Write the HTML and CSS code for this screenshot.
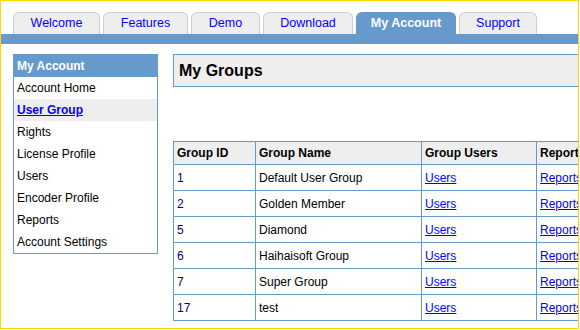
FILE: index.html
```html
<!DOCTYPE html>
<html lang="en">
<head>
  <meta charset="UTF-8">
  <title>My Account - User Group</title>
  <link rel="stylesheet" href="styles.css">
</head>
<body>
  <div class="frame">
    <div class="page">
      <ul class="tabs">
        <li class="tab tab-welcome"><a href="#">Welcome</a></li>
        <li class="tab tab-features"><a href="#">Features</a></li>
        <li class="tab tab-demo"><a href="#">Demo</a></li>
        <li class="tab tab-download"><a href="#">Download</a></li>
        <li class="tab tab-account tab-active"><a href="#">My Account</a></li>
        <li class="tab tab-support"><a href="#">Support</a></li>
      </ul>
      <div class="tab-bar"></div>

      <div class="content">
        <div class="sidebar">
          <div class="sidebar-title">My Account</div>
          <a class="side-item" href="#">Account Home</a>
          <a class="side-item side-current" href="#">User Group</a>
          <a class="side-item" href="#">Rights</a>
          <a class="side-item" href="#">License Profile</a>
          <a class="side-item" href="#">Users</a>
          <a class="side-item" href="#">Encoder Profile</a>
          <a class="side-item" href="#">Reports</a>
          <a class="side-item" href="#">Account Settings</a>
        </div>

        <div class="main">
          <div class="page-title">My Groups</div>
          <table class="groups">
            <tr>
              <th class="col-id">Group ID</th>
              <th class="col-name">Group Name</th>
              <th class="col-users">Group Users</th>
              <th class="col-reports">Reports</th>
            </tr>
            <tr><td class="gid">1</td><td>Default User Group</td><td><a href="#">Users</a></td><td><a href="#">Reports</a></td></tr>
            <tr><td class="gid">2</td><td>Golden Member</td><td><a href="#">Users</a></td><td><a href="#">Reports</a></td></tr>
            <tr><td class="gid">5</td><td>Diamond</td><td><a href="#">Users</a></td><td><a href="#">Reports</a></td></tr>
            <tr><td class="gid">6</td><td>Haihaisoft Group</td><td><a href="#">Users</a></td><td><a href="#">Reports</a></td></tr>
            <tr><td class="gid">7</td><td>Super Group</td><td><a href="#">Users</a></td><td><a href="#">Reports</a></td></tr>
            <tr><td class="gid">17</td><td>test</td><td><a href="#">Users</a></td><td><a href="#">Reports</a></td></tr>
          </table>
        </div>
      </div>
    </div>
  </div>
</body>
</html>
```

FILE: styles.css
```css
* {
  box-sizing: border-box;
  margin: 0;
  padding: 0;
}

body {
  background-color: white;
  font-family: "Liberation Sans", Arial, sans-serif;
  font-size: 12px;
  color: black;
}

.frame {
  width: 579px;
  height: 329px;
  border: 1px solid #ffd800;
  overflow: hidden;
}

.page {
  width: 700px;
  padding-top: 11px;
}

/* Tabs */

.tabs {
  display: flex;
  gap: 3px;
  list-style: none;
  padding-left: 12px;
  height: 22px;
}

.tab {
  height: 22px;
  border: 1px solid #c8d0dc;
  border-bottom: none;
  border-radius: 6px 6px 0 0;
  background-color: #eeeeee;
}

.tab a {
  display: block;
  text-align: center;
  line-height: 21px;
  font-size: 12.5px;
  color: #0000ff;
  text-decoration: none;
}

.tab-welcome { width: 87px; }
.tab-features { width: 85px; }
.tab-demo { width: 69px; }
.tab-download { width: 90px; }
.tab-account { width: 100px; }
.tab-support { width: 78px; }

.tab-active {
  background-color: #6699cc;
  border-color: #6699cc;
}

.tab-active a {
  color: white;
  font-weight: bold;
}

.tab-bar {
  height: 10px;
  background-color: #6699cc;
}

/* Layout */

.content {
  display: flex;
  gap: 15px;
  padding: 10px 0 0 12px;
}

/* Sidebar */

.sidebar {
  display: flex;
  flex-direction: column;
  width: 145px;
  height: 200px;
  border: 1px solid #6699cc;
  align-self: flex-start;
}

.sidebar-title {
  height: 22px;
  line-height: 22px;
  padding-left: 3px;
  background-color: #6699cc;
  color: white;
  font-weight: bold;
}

.side-item {
  height: 22px;
  line-height: 22px;
  padding-left: 3px;
  color: black;
  text-decoration: none;
}

.side-current {
  background-color: #eeeeee;
  color: #0000ff;
  font-weight: bold;
  text-decoration: underline;
}

/* Main */

.main {
  flex: 1;
}

.page-title {
  height: 33px;
  line-height: 31px;
  padding-left: 5px;
  border: 1px solid #6699cc;
  background-color: #eeeeee;
  font-size: 16px;
  font-weight: bold;
}

.groups {
  margin-top: 54px;
  border-collapse: collapse;
}

.groups th,
.groups td {
  border: 1px solid #6699cc;
  padding: 0 3px;
  text-align: left;
  vertical-align: middle;
}

.groups th {
  height: 23px;
  background-color: #eeeeee;
  font-weight: bold;
}

.groups td {
  height: 26px;
}

.groups a {
  color: #0000ff;
}

.gid {
  color: #000080;
}

.col-id {
  width: 82px;
}

.col-name {
  width: 166px;
}

.col-users {
  width: 115px;
}

.col-reports {
  width: 115px;
}
```
